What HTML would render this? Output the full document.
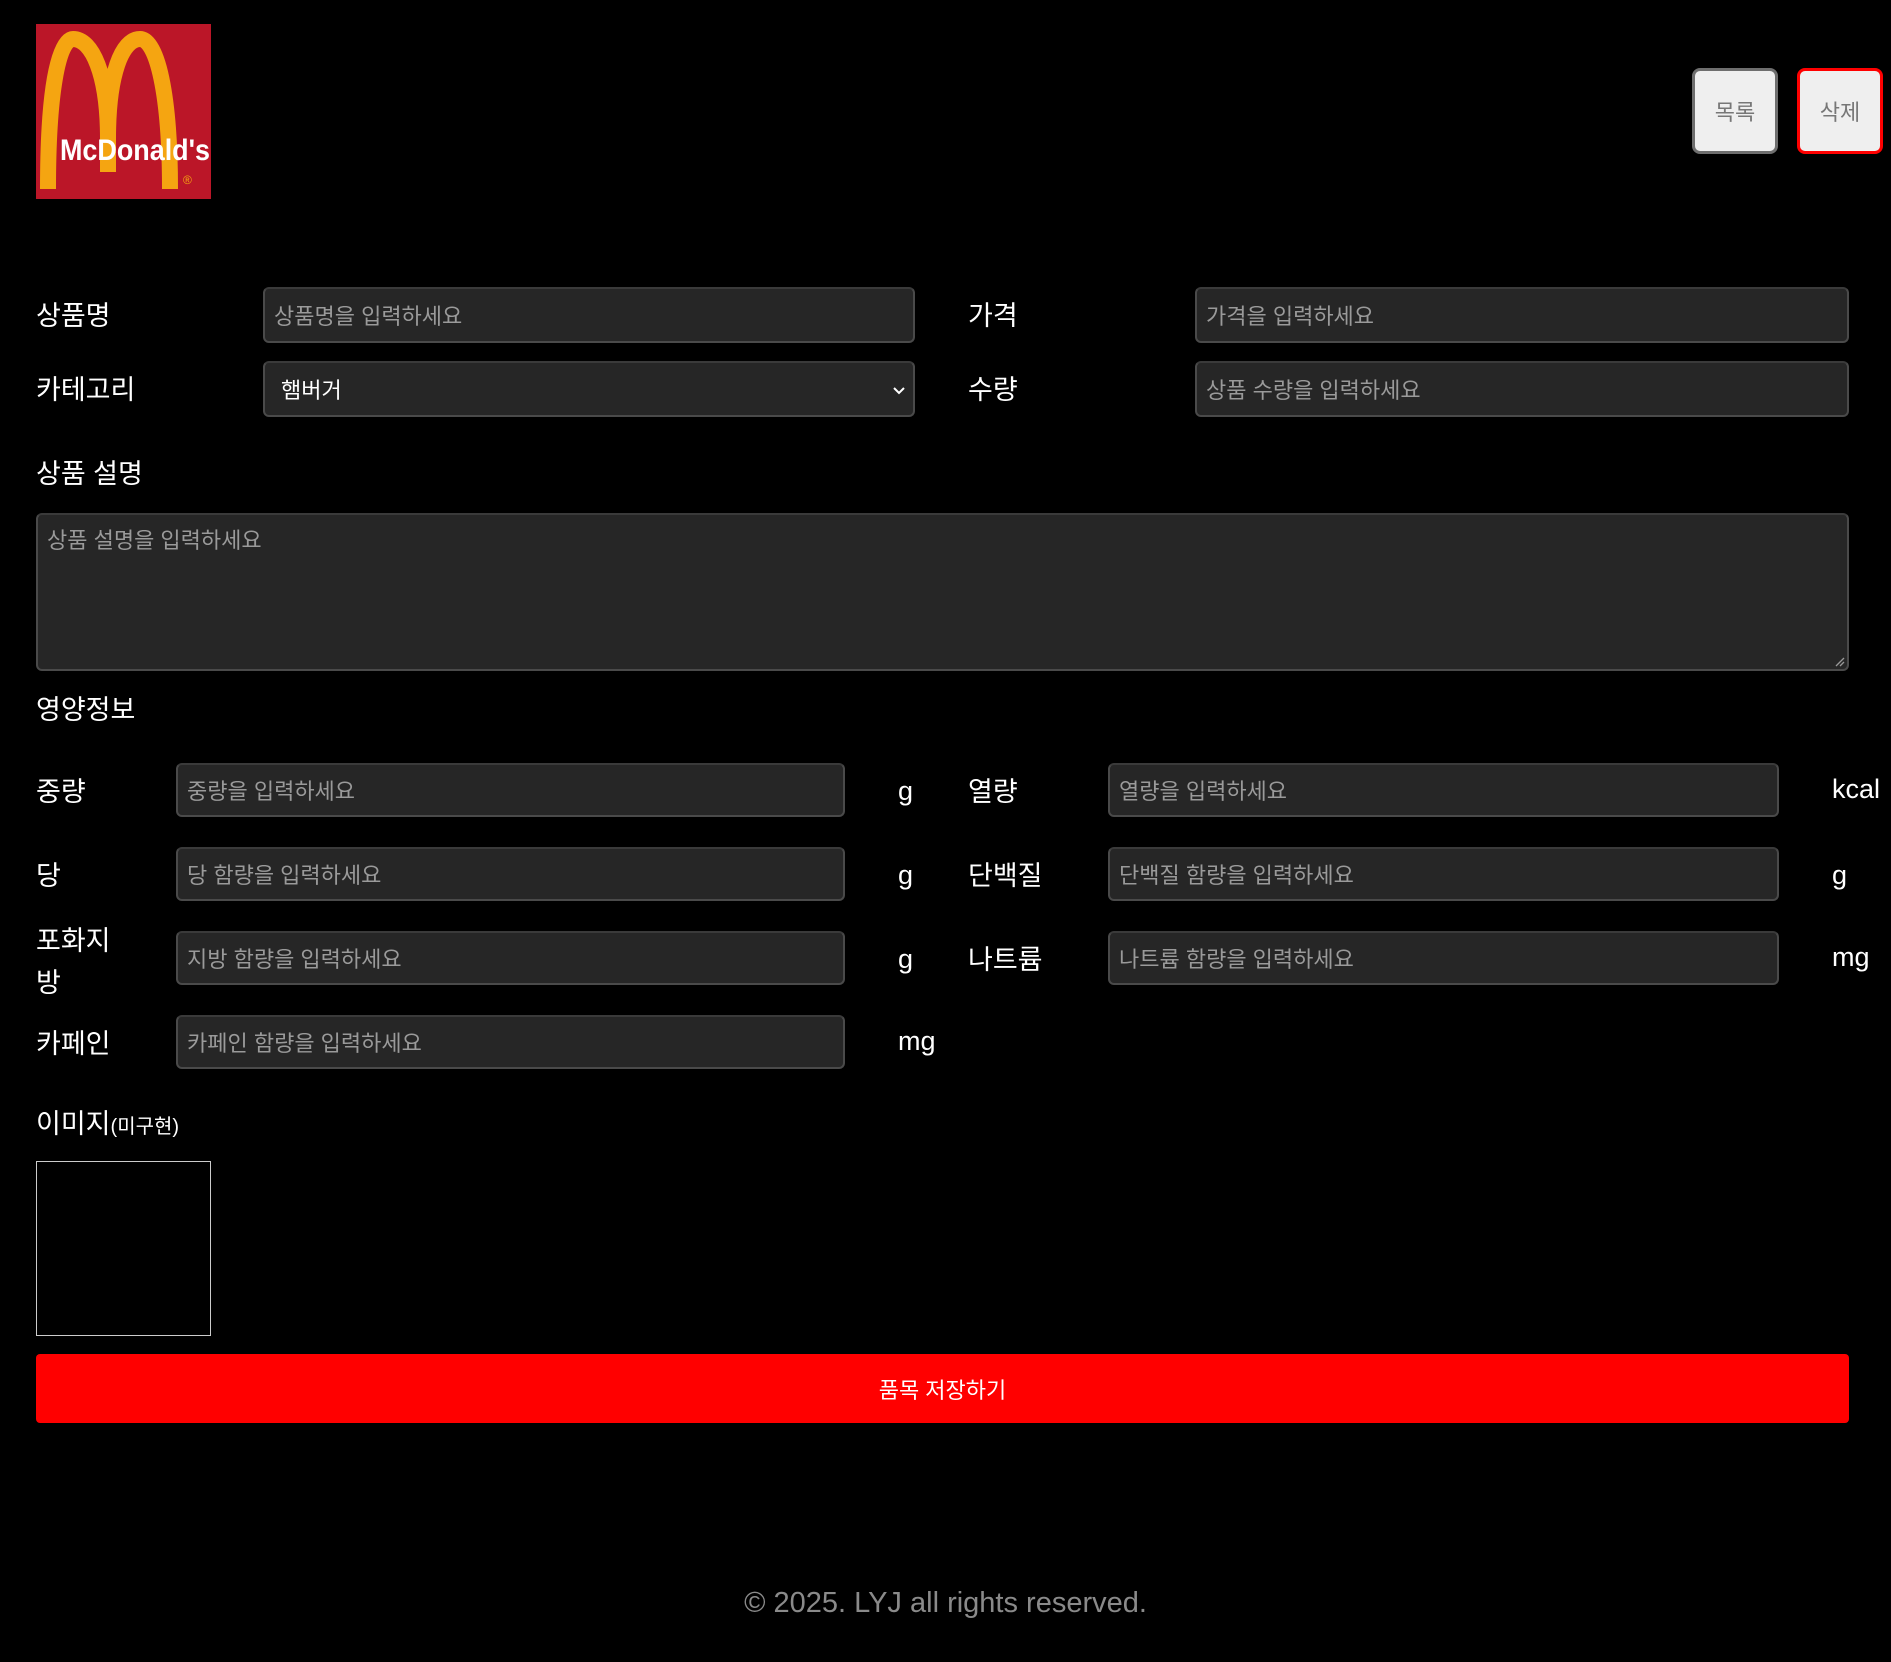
<!DOCTYPE html>
<html><head><meta charset="utf-8">
<style>
*{box-sizing:border-box;margin:0;padding:0}
html,body{width:1891px;height:1662px;background:#000;overflow:hidden}
body{position:relative;font-family:"Liberation Sans","Noto Sans CJK KR",sans-serif;color:#fff}
.a{position:absolute}
.lbl{position:absolute;font-size:27px;line-height:32px;color:#fff;margin-top:2px}
.inp{position:absolute;background:#262626;border:2px solid #4a4a4a;border-top-color:#3a3a3a;border-radius:6px;color:#9a9a9a;font-size:22px;padding-left:9px;display:flex;align-items:center}
.btn{position:absolute;top:68px;width:86px;height:86px;background:#efefef;border:3px solid #6e6e6e;border-radius:8px;color:#777;font-size:22px;display:flex;align-items:center;justify-content:center}
.unit{position:absolute;font-size:27px;color:#fff}
</style></head><body>
<svg class="a" style="left:36px;top:24px" width="175" height="175" viewBox="0 0 175 175">
<rect width="175" height="175" fill="#bb1628"/>
<path d="M12 165 C12 70 22 15 37 15 C56 15 72 50 72 115 C72 50 86 15 104 15 C121 15 134 70 134 165" fill="none" stroke="#f5a511" stroke-width="16"/>
<path d="M72 100 L72 148" stroke="#f5a511" stroke-width="16"/>
<text x="24" y="136" style="font-family:'Liberation Sans';font-weight:bold;font-size:30px" fill="#fff" textLength="150" lengthAdjust="spacingAndGlyphs">McDonald's</text>
<text x="147" y="160" font-family="Liberation Sans" font-size="12" fill="#f5a511">®</text>
</svg>
<div class="btn" style="left:1692px">목록</div>
<div class="btn" style="left:1797px;border-color:#f00">삭제</div>

<div class="lbl" style="left:36px;top:298px">상품명</div>
<div class="inp" style="left:263px;top:287px;width:652px;height:56px">상품명을 입력하세요</div>
<div class="lbl" style="left:968px;top:298px">가격</div>
<div class="inp" style="left:1195px;top:287px;width:654px;height:56px">가격을 입력하세요</div>

<div class="lbl" style="left:36px;top:372px">카테고리</div>
<div class="inp" style="left:263px;top:361px;width:652px;height:56px;color:#fff;padding-left:16px">햄버거
<svg class="a" style="right:6px;top:22px" width="16" height="12" viewBox="0 0 16 12"><path d="M3 3 L8 8 L13 3" fill="none" stroke="#fff" stroke-width="2"/></svg></div>
<div class="lbl" style="left:968px;top:372px">수량</div>
<div class="inp" style="left:1195px;top:361px;width:654px;height:56px">상품 수량을 입력하세요</div>

<div class="lbl" style="left:36px;top:456px">상품 설명</div>
<div class="inp" style="left:36px;top:513px;width:1813px;height:158px;align-items:flex-start;padding-top:8px">상품 설명을 입력하세요
<svg class="a" style="right:2px;bottom:2px" width="12" height="12"><path d="M11 3 L3 11 M11 7 L7 11" stroke="#999" stroke-width="1.3"/></svg></div>

<div class="lbl" style="left:36px;top:692px">영양정보</div>

<div class="lbl" style="left:36px;top:774px">중량</div>
<div class="inp" style="left:176px;top:763px;width:669px;height:54px">중량을 입력하세요</div>
<div class="unit" style="left:898px;top:776px">g</div>
<div class="lbl" style="left:968px;top:774px">열량</div>
<div class="inp" style="left:1108px;top:763px;width:671px;height:54px">열량을 입력하세요</div>
<div class="unit" style="left:1832px;top:774px">kcal</div>

<div class="lbl" style="left:36px;top:858px">당</div>
<div class="inp" style="left:176px;top:847px;width:669px;height:54px">당 함량을 입력하세요</div>
<div class="unit" style="left:898px;top:860px">g</div>
<div class="lbl" style="left:968px;top:858px">단백질</div>
<div class="inp" style="left:1108px;top:847px;width:671px;height:54px">단백질 함량을 입력하세요</div>
<div class="unit" style="left:1832px;top:860px">g</div>

<div class="lbl" style="left:36px;top:918px;line-height:42px">포화지<br>방</div>
<div class="inp" style="left:176px;top:931px;width:669px;height:54px">지방 함량을 입력하세요</div>
<div class="unit" style="left:898px;top:944px">g</div>
<div class="lbl" style="left:968px;top:942px">나트륨</div>
<div class="inp" style="left:1108px;top:931px;width:671px;height:54px">나트륨 함량을 입력하세요</div>
<div class="unit" style="left:1832px;top:942px">mg</div>

<div class="lbl" style="left:36px;top:1026px">카페인</div>
<div class="inp" style="left:176px;top:1015px;width:669px;height:54px">카페인 함량을 입력하세요</div>
<div class="unit" style="left:898px;top:1026px">mg</div>

<div class="lbl" style="left:36px;top:1106px">이미지<span style="font-size:20px">(미구현)</span></div>
<div class="a" style="left:36px;top:1161px;width:175px;height:175px;border:1px solid #ccc"></div>

<div class="a" style="left:36px;top:1354px;width:1813px;height:69px;background:#f00;border-radius:4px;color:#fff;font-size:22px;display:flex;align-items:center;justify-content:center">품목 저장하기</div>

<div class="a" style="left:0;width:1891px;top:1587px;text-align:center;font-size:29px;color:#8a8a8a">© 2025. LYJ all rights reserved.</div>
</body></html>
